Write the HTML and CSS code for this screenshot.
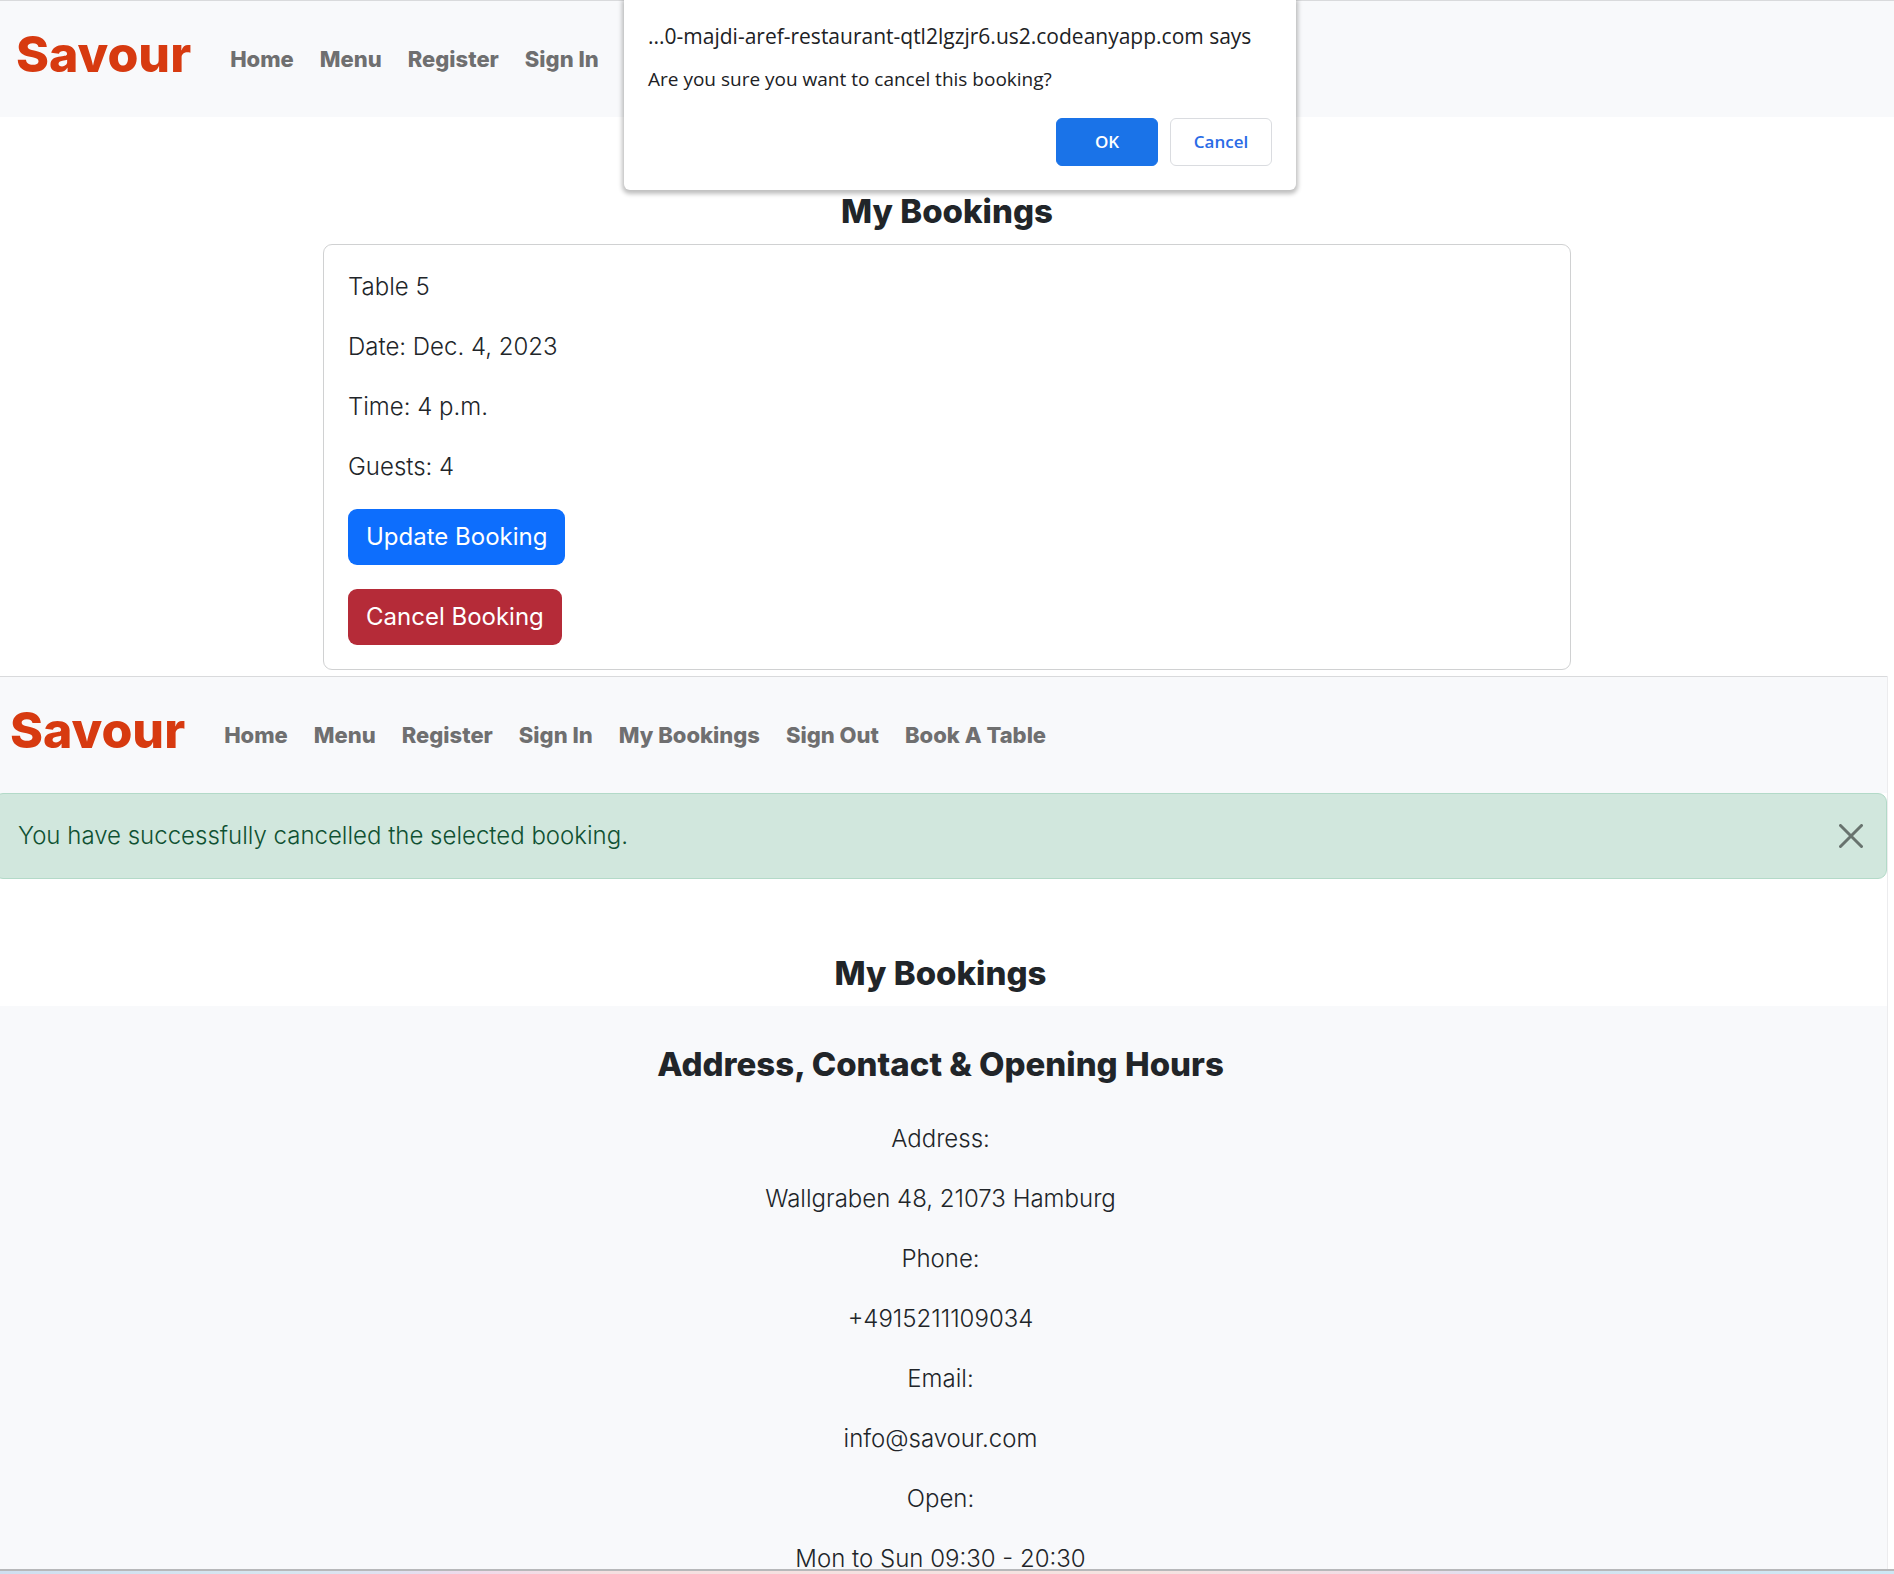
FILE: index.html
```html
<!DOCTYPE html>
<html lang="en">
<head>
<meta charset="utf-8">
<title>Savour - My Bookings</title>
<link rel="stylesheet" href="styles.css">
</head>
<body>
<section class="page">
  <nav class="navbar">
    <a class="brand" href="#">Savour</a>
    <a class="nav-link" href="#">Home</a>
    <a class="nav-link" href="#">Menu</a>
    <a class="nav-link" href="#">Register</a>
    <a class="nav-link" href="#">Sign In</a>
  </nav>
  <main class="bookings">
    <h2 class="title">My Bookings</h2>
    <article class="card">
      <p>Table 5</p>
      <p>Date: Dec. 4, 2023</p>
      <p>Time: 4 p.m.</p>
      <p>Guests: 4</p>
      <div class="actions">
        <button class="btn btn-update" type="button">Update Booking</button>
        <button class="btn btn-cancel" type="button">Cancel Booking</button>
      </div>
    </article>
  </main>
  <div class="dialog" role="dialog" aria-labelledby="dialog-title">
    <h1 class="dialog-title" id="dialog-title">...0-majdi-aref-restaurant-qtl2lgzjr6.us2.codeanyapp.com says</h1>
    <p class="dialog-text">Are you sure you want to cancel this booking?</p>
    <div class="dialog-actions">
      <button class="dialog-btn dialog-ok" type="button">OK</button>
      <button class="dialog-btn" type="button">Cancel</button>
    </div>
  </div>
</section>

<section class="page page-after">
  <nav class="navbar">
    <a class="brand" href="#">Savour</a>
    <a class="nav-link" href="#">Home</a>
    <a class="nav-link" href="#">Menu</a>
    <a class="nav-link" href="#">Register</a>
    <a class="nav-link" href="#">Sign In</a>
    <a class="nav-link" href="#">My Bookings</a>
    <a class="nav-link" href="#">Sign Out</a>
    <a class="nav-link" href="#">Book A Table</a>
  </nav>
  <div class="alert" role="alert">
    <span>You have successfully cancelled the selected booking.</span>
    <button class="close" type="button" aria-label="Close">
      <svg width="24" height="24" viewBox="0 0 24 24" fill="none" stroke="currentColor" stroke-width="3" stroke-linecap="round"><path d="M1.5 1.5l21 21M22.5 1.5l-21 21"/></svg>
    </button>
  </div>
  <main class="bookings">
    <h2 class="title">My Bookings</h2>
  </main>
  <footer class="footer">
    <h2 class="title">Address, Contact &amp; Opening Hours</h2>
    <p>Address:</p>
    <p>Wallgraben 48, 21073 Hamburg</p>
    <p>Phone:</p>
    <p>+4915211109034</p>
    <p>Email:</p>
    <p>info@savour.com</p>
    <p>Open:</p>
    <p>Mon to Sun 09:30 - 20:30</p>
  </footer>
</section>
<div class="taskbar"></div>
</body>
</html>
```

FILE: styles.css
```css
* { box-sizing: border-box; }

body {
  margin: 0;
  height: 100vh;
  display: flex;
  flex-direction: column;
  overflow: hidden;
  background: #fff;
  color: #212529;
  font: 300 24px/36px Inter, "Liberation Sans", sans-serif;
}

p { margin: 0 0 24px; }

.page { position: relative; flex: none; }

/* second window, overlapping the left edge of the screen */
.page-after {
  flex: 1;
  min-height: 0;
  overflow: hidden;
  margin: 6px 6px 0 -6px;
  border-right: 1px solid #ececee;
}

.navbar {
  display: flex;
  align-items: center;
  height: 117px;
  padding: 0 16px;
  border-top: 1px solid #d9dadc;
  background: #f8f9fb;
}

.brand {
  margin-right: 26px;
  padding-bottom: 10px;
  color: #d73a10;
  font-size: 50px;
  font-weight: 800;
  line-height: 72px;
  text-decoration: none;
}

.nav-link {
  padding: 0 13px;
  color: #6f6f70;
  font-size: 22px;
  font-weight: 800;
  text-decoration: none;
}

.bookings { padding-top: 75px; }

.title {
  margin: 0 0 14px;
  font-size: 33px;
  font-weight: 800;
  line-height: 38px;
  text-align: center;
}

.card {
  width: 1248px;
  max-width: 100%;
  margin: 0 auto;
  padding: 24px;
  border: 1px solid #d0d1d2;
  border-radius: 9px;
}

.actions {
  display: flex;
  flex-direction: column;
  align-items: flex-start;
  gap: 24px;
}

.btn {
  height: 56px;
  padding: 0 18px;
  border: 0;
  border-radius: 9px;
  color: #fff;
  font: inherit;
  font-weight: 400;
}

.btn-update { background: #0d6efd; }
.btn-cancel { background: #b52b38; }

.dialog {
  position: absolute;
  top: 0;
  left: 50%;
  width: 672px;
  margin-left: -323px;
  padding: 18px 24px 24px;
  border-radius: 0 0 6px 6px;
  background: #fff;
  box-shadow: 0 2px 4px 2px rgba(0, 0, 0, 0.25);
  color: #202124;
  font-family: "Open Sans", "Noto Sans", sans-serif;
  font-weight: 400;
}

.dialog-title {
  margin: 0 0 7px;
  font-size: 21px;
  font-weight: 400;
  line-height: 36px;
  white-space: nowrap;
}

.dialog-text {
  margin: 0 0 21px;
  font-size: 19px;
}

.dialog-actions {
  display: flex;
  justify-content: flex-end;
  gap: 12px;
}

.dialog-btn {
  width: 102px;
  height: 48px;
  border: 1px solid #dadce0;
  border-radius: 6px;
  background: #fff;
  color: #2a6be6;
  font: 600 17px/24px "Open Sans", "Noto Sans", sans-serif;
}

.dialog-ok {
  border-color: #1a73e8;
  background: #1a73e8;
  color: #fff;
}

.alert {
  display: flex;
  align-items: center;
  justify-content: space-between;
  height: 86px;
  padding: 0 23px;
  border: 1px solid #b3dac8;
  border-radius: 9px;
  background: #d1e7dd;
  color: #0f5132;
}

.close {
  display: flex;
  padding: 0;
  border: 0;
  background: none;
  color: #68736e;
}

.footer {
  padding-top: 39px;
  background: #f8f9fb;
  text-align: center;
}

.footer .title { margin-bottom: 38px; }

.taskbar {
  flex: none;
  height: 5px;
  border-top: 2px solid #b7b8ba;
  background: linear-gradient(90deg, #cfdff0, #d6e6f0 15%, #e0e0f0 21%, #f0d9ea 25%, #f5dfe0 32%, #f5e3e0 60%, #f0dce6 74%, #dfe0f0 78%, #d2e4f0 84%, #cde8f5);
}
```
